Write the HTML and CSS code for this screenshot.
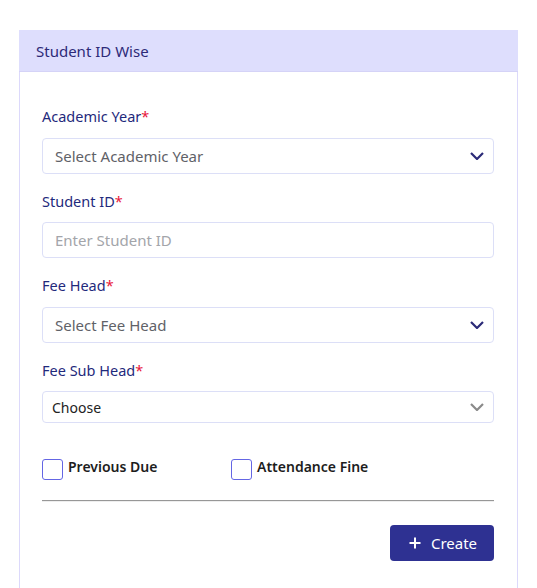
FILE: index.html
```html
<!DOCTYPE html>
<html lang="en">
<head>
<meta charset="utf-8">
<title>Student ID Wise</title>
<link rel="stylesheet" href="styles.css">
</head>
<body>
<div class="card">
  <div class="card-header">Student ID Wise</div>
  <div class="card-body">
    <div class="field">
      <label class="label">Academic Year<span class="req">*</span></label>
      <div class="control select">
        <span class="placeholder">Select Academic Year</span>
        <svg class="chev" width="14" height="8" viewBox="0 0 14 8"><polyline points="1,1 7,7 13,1" fill="none" stroke="#2b2a78" stroke-width="2.2"/></svg>
      </div>
    </div>
    <div class="field">
      <label class="label">Student ID<span class="req">*</span></label>
      <div class="control input"><span class="hint">Enter Student ID</span></div>
    </div>
    <div class="field">
      <label class="label">Fee Head<span class="req">*</span></label>
      <div class="control select">
        <span class="placeholder">Select Fee Head</span>
        <svg class="chev" width="14" height="8" viewBox="0 0 14 8"><polyline points="1,1 7,7 13,1" fill="none" stroke="#2b2a78" stroke-width="2.2"/></svg>
      </div>
    </div>
    <div class="field">
      <label class="label">Fee Sub Head<span class="req">*</span></label>
      <div class="control choose">
        <span class="value">Choose</span>
        <svg class="chev" width="14" height="8" viewBox="0 0 14 8"><polyline points="1,1 7,7 13,1" fill="none" stroke="#8a8a8a" stroke-width="2.2"/></svg>
      </div>
    </div>
    <div class="checks">
      <div class="check"><span class="box"></span><span class="check-text">Previous Due</span></div>
      <div class="check"><span class="box"></span><span class="check-text">Attendance Fine</span></div>
    </div>
    <div class="rule"></div>
    <div class="actions">
      <button class="btn"><svg width="12" height="12" viewBox="0 0 12 12"><path d="M6 0.5V11.5M0.5 6H11.5" stroke="#fff" stroke-width="2"/></svg><span>Create</span></button>
    </div>
  </div>
</div>
</body>
</html>
```

FILE: styles.css
```css
html, body {
  margin: 0;
  padding: 0;
  background: #fff;
  overflow: hidden;
}
body {
  font-family: "Noto Sans", "Open Sans", sans-serif;
  padding: 30px 0 0 19px;
  height: 558px;
}
.card {
  width: 497px;
  height: 600px;
  border: 1px solid #dcd9fb;
  border-top: none;
  border-bottom: none;
  box-sizing: content-box;
}
.card-header {
  height: 41px;
  background: #dedefd;
  border-bottom: 1px solid #d5d3f7;
  display: flex;
  align-items: center;
  padding: 0 16px;
  font-size: 15px;
  color: #2d2a78;
  margin: 0 -1px;
  padding-left: 17px;
}
.card-body {
  padding: 33px 23px 0 22px;
}
.field {
  display: flex;
  flex-direction: column;
  margin-bottom: 16px;
}
.label {
  font-size: 14.5px;
  line-height: 22px;
  color: #1f2a7c;
  margin-bottom: 10.5px;
}
.req {
  color: #e8163a;
}
.control {
  height: 36px;
  box-sizing: border-box;
  border: 1px solid #dcdff7;
  border-radius: 4px;
  display: flex;
  align-items: center;
  justify-content: space-between;
  padding: 0 9px 0 12px;
  font-size: 15px;
}
.placeholder {
  color: #5f6268;
}
.hint {
  color: #a3a5aa;
}
.choose {
  height: 32px;
  padding-left: 9px;
}
.value {
  color: #222;
  font-size: 14px;
}
.checks {
  display: flex;
  margin-top: 36px;
}
.check {
  display: flex;
  align-items: flex-start;
  width: 189px;
}
.box {
  width: 21px;
  height: 21px;
  box-sizing: border-box;
  border: 1px solid #6466e4;
  border-radius: 3px;
  margin-right: 5px;
}
.check-text {
  font-size: 14px;
  font-weight: 600;
  color: #1d1d1d;
  line-height: 16px;
}
.rule {
  margin-top: 19.5px;
  border-top: 1px solid #979797;
  border-bottom: 1px solid #eeeeee;
}
.actions {
  display: flex;
  justify-content: flex-end;
  margin-top: 23px;
}
.btn {
  width: 104px;
  height: 36px;
  background: #2e3192;
  border: none;
  border-radius: 4px;
  color: #fff;
  font-family: inherit;
  font-size: 15px;
  display: flex;
  align-items: center;
  justify-content: center;
  gap: 10px;
  padding: 0 0 0 2px;
}
```
